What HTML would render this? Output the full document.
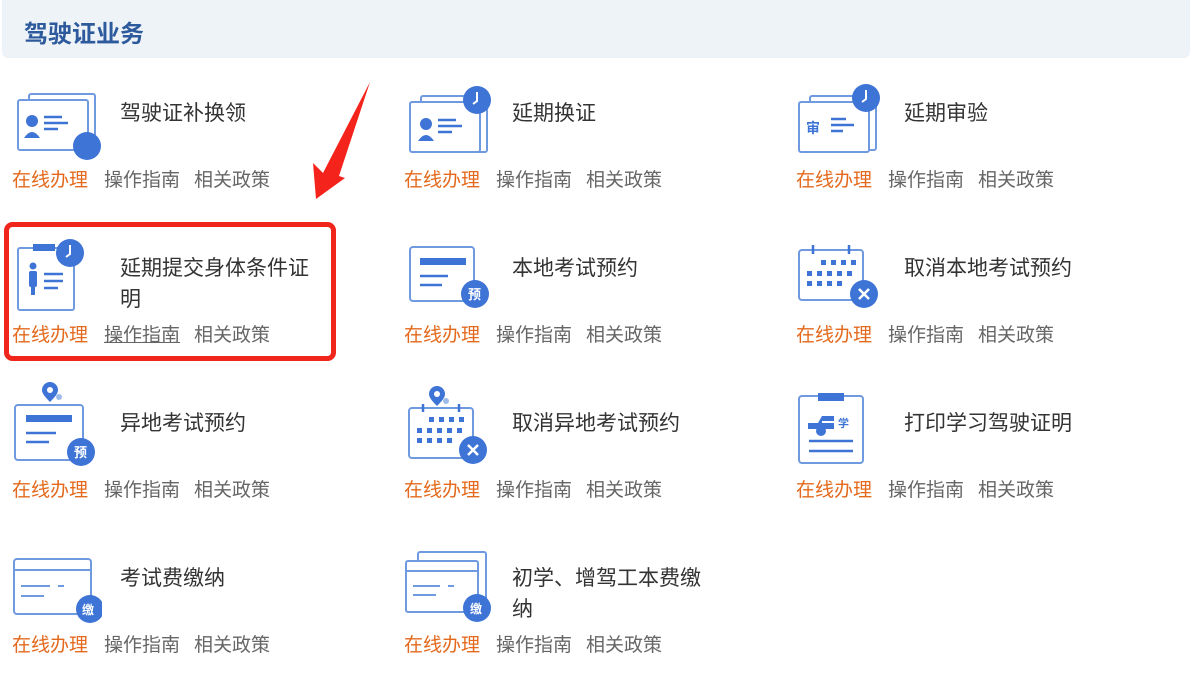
<!DOCTYPE html>
<html><head><meta charset="utf-8"><style>
body{margin:0;width:1200px;height:689px;background:#fff;position:relative;overflow:hidden;font-family:"Liberation Sans","Noto Sans CJK SC",sans-serif}
.hd{position:absolute;left:2px;top:0;width:1188px;height:58px;background:#eef3f8;border-radius:0 0 6px 6px}
.hd span{position:absolute;left:22px;top:14px;font-size:24px;font-weight:bold;color:#2d5a9c}
.it{position:absolute;width:380px;height:150px}
.it svg{position:absolute;left:0;top:0;overflow:visible}
.t{position:absolute;left:108px;top:18px;font-size:21px;line-height:31px;color:#333;width:205px}
.l{position:absolute;top:89px;font-size:19px;line-height:24px;color:#666;white-space:nowrap}
.l1{left:0;color:#e4691c}.l2{left:92px}.l3{left:182px}
.u{text-decoration:underline}
</style></head><body>
<div class="hd"><span>驾驶证业务</span></div>

<svg width="1200" height="689" style="position:absolute;left:0;top:0">
<rect x="6.5" y="224.5" width="327" height="134" rx="6" fill="none" stroke="#f0261d" stroke-width="5"/>
<polygon points="370,82 339,176 345,178 316,199 313,163 323,173" fill="#f4231b"/>
</svg>

<!-- row 1 -->
<div class="it" style="left:12px;top:80px">
<svg width="100" height="90"><g fill="none" stroke="#6f9ae0" stroke-width="2"><rect x="17" y="14" width="66" height="56" rx="2"/><rect x="6" y="20" width="70" height="50" rx="2" fill="#fff"/></g>
<circle cx="20" cy="41" r="6" fill="#3e74d6"/><path d="M12 58 q8-12 16 0z" fill="#3e74d6"/>
<g stroke="#3e74d6" stroke-width="2.5"><line x1="32" y1="37" x2="50" y2="37"/><line x1="32" y1="43" x2="56" y2="43"/><line x1="32" y1="49" x2="46" y2="49"/></g>
<circle cx="75" cy="66" r="14" fill="#3e74d6"/></svg>
<div class="t">驾驶证补换领</div>
<div class="l l1">在线办理</div><div class="l l2">操作指南</div><div class="l l3">相关政策</div></div>

<div class="it" style="left:404px;top:80px">
<svg width="100" height="90"><g fill="none" stroke="#6f9ae0" stroke-width="2"><rect x="17" y="16" width="66" height="56" rx="2"/><rect x="6" y="22" width="70" height="50" rx="2" fill="#fff"/></g>
<circle cx="22" cy="44" r="6" fill="#3e74d6"/><path d="M14 61 q8-12 16 0z" fill="#3e74d6"/>
<g stroke="#3e74d6" stroke-width="2.5"><line x1="34" y1="40" x2="52" y2="40"/><line x1="34" y1="46" x2="58" y2="46"/><line x1="34" y1="52" x2="48" y2="52"/></g>
<circle cx="73" cy="20" r="14" fill="#3e74d6"/><path d="M73 12 v9 l-4 3" stroke="#fff" stroke-width="2" fill="none"/></svg>
<div class="t">延期换证</div>
<div class="l l1">在线办理</div><div class="l l2">操作指南</div><div class="l l3">相关政策</div></div>

<div class="it" style="left:796px;top:80px">
<svg width="100" height="90"><g fill="none" stroke="#6f9ae0" stroke-width="2"><rect x="14" y="16" width="66" height="54" rx="2"/><rect x="3" y="22" width="70" height="50" rx="2" fill="#fff"/></g>
<text x="10" y="53" font-size="14" font-weight="bold" fill="#3e74d6" font-family="Noto Sans CJK SC">审</text>
<g stroke="#3e74d6" stroke-width="2.5"><line x1="35" y1="39" x2="50" y2="39"/><line x1="35" y1="45" x2="58" y2="45"/><line x1="35" y1="51" x2="47" y2="51"/></g>
<circle cx="70" cy="18" r="14" fill="#3e74d6"/><path d="M70 10 v9 l-4 3" stroke="#fff" stroke-width="2" fill="none"/></svg>
<div class="t">延期审验</div>
<div class="l l1">在线办理</div><div class="l l2">操作指南</div><div class="l l3">相关政策</div></div>

<!-- row 2 -->
<div class="it" style="left:12px;top:235px">
<svg width="100" height="90"><rect x="6" y="13" width="56" height="62" rx="2" fill="none" stroke="#6f9ae0" stroke-width="2"/>
<rect x="21" y="9" width="22" height="7" fill="#3e74d6"/>
<circle cx="21" cy="31" r="3.5" fill="#3e74d6"/><rect x="17" y="36" width="8" height="16" rx="2" fill="#3e74d6"/><rect x="19" y="50" width="4" height="10" fill="#3e74d6"/>
<g stroke="#3e74d6" stroke-width="2.5"><line x1="32" y1="39" x2="51" y2="39"/><line x1="32" y1="46" x2="51" y2="46"/><line x1="32" y1="53" x2="46" y2="53"/></g>
<circle cx="58" cy="18" r="14" fill="#3e74d6"/><path d="M58 10 v9 l-4 3" stroke="#fff" stroke-width="2" fill="none"/></svg>
<div class="t">延期提交身体条件证明</div>
<div class="l l1">在线办理</div><div class="l l2 u">操作指南</div><div class="l l3">相关政策</div></div>

<div class="it" style="left:404px;top:235px">
<svg width="100" height="90"><rect x="6" y="12" width="64" height="54" rx="3" fill="none" stroke="#6f9ae0" stroke-width="2"/>
<rect x="16" y="23" width="46" height="7" fill="#3e74d6"/><g stroke="#3e74d6" stroke-width="2.5"><line x1="16" y1="41" x2="44" y2="41"/><line x1="16" y1="50" x2="38" y2="50"/></g>
<circle cx="71" cy="59" r="14" fill="#3e74d6"/><text x="64" y="64" font-size="13" font-weight="bold" fill="#fff" font-family="Noto Sans CJK SC">预</text></svg>
<div class="t">本地考试预约</div>
<div class="l l1">在线办理</div><div class="l l2">操作指南</div><div class="l l3">相关政策</div></div>

<div class="it" style="left:796px;top:235px">
<svg width="100" height="90"><rect x="3" y="15" width="64" height="50" rx="3" fill="none" stroke="#6f9ae0" stroke-width="2"/>
<g stroke="#3e74d6" stroke-width="2.5"><line x1="17" y1="10" x2="17" y2="19"/><line x1="53" y1="10" x2="53" y2="19"/></g>
<g fill="#3e74d6"><rect x="25" y="25" width="5" height="5"/><rect x="35" y="25" width="5" height="5"/><rect x="45" y="25" width="5" height="5"/><rect x="55" y="25" width="5" height="5"/>
<rect x="11" y="36" width="5" height="5"/><rect x="21" y="36" width="5" height="5"/><rect x="31" y="36" width="5" height="5"/><rect x="41" y="36" width="5" height="5"/><rect x="51" y="36" width="5" height="5"/>
<rect x="11" y="46" width="5" height="5"/><rect x="21" y="46" width="5" height="5"/><rect x="31" y="46" width="5" height="5"/><rect x="41" y="46" width="5" height="5"/></g>
<circle cx="68" cy="59" r="14" fill="#3e74d6"/><path d="M63 54 l10 10 M73 54 l-10 10" stroke="#fff" stroke-width="2.5"/></svg>
<div class="t">取消本地考试预约</div>
<div class="l l1">在线办理</div><div class="l l2">操作指南</div><div class="l l3">相关政策</div></div>

<!-- row 3 -->
<div class="it" style="left:12px;top:390px">
<svg width="100" height="90"><rect x="3" y="15" width="68" height="55" rx="3" fill="none" stroke="#6f9ae0" stroke-width="2"/>
<path d="M38 12 c-6-6-8-9-8-12 a8 8 0 0 1 16 0 c0 3-2 6-8 12z" fill="#3e74d6"/><circle cx="38" cy="0" r="3" fill="#fff"/><circle cx="47" cy="7" r="3" fill="#9fbbe9"/>
<rect x="14" y="25" width="46" height="7" fill="#3e74d6"/><g stroke="#3e74d6" stroke-width="2.5"><line x1="14" y1="43" x2="44" y2="43"/><line x1="14" y1="52" x2="37" y2="52"/></g>
<circle cx="69" cy="62" r="14" fill="#3e74d6"/><text x="62" y="67" font-size="13" font-weight="bold" fill="#fff" font-family="Noto Sans CJK SC">预</text></svg>
<div class="t">异地考试预约</div>
<div class="l l1">在线办理</div><div class="l l2">操作指南</div><div class="l l3">相关政策</div></div>

<div class="it" style="left:404px;top:390px">
<svg width="100" height="90"><rect x="5" y="18" width="64" height="50" rx="3" fill="none" stroke="#6f9ae0" stroke-width="2"/>
<g stroke="#3e74d6" stroke-width="2.5"><line x1="19" y1="14" x2="19" y2="22"/><line x1="55" y1="14" x2="55" y2="22"/></g>
<path d="M33 16 c-6-6-8-9-8-12 a8 8 0 0 1 16 0 c0 3-2 6-8 12z" fill="#3e74d6"/><circle cx="33" cy="4" r="3" fill="#fff"/><circle cx="42" cy="11" r="3" fill="#9fbbe9"/>
<g fill="#3e74d6"><rect x="25" y="27" width="5" height="5"/><rect x="35" y="27" width="5" height="5"/><rect x="45" y="27" width="5" height="5"/><rect x="55" y="27" width="5" height="5"/>
<rect x="13" y="38" width="5" height="5"/><rect x="23" y="38" width="5" height="5"/><rect x="33" y="38" width="5" height="5"/><rect x="43" y="38" width="5" height="5"/><rect x="53" y="38" width="5" height="5"/>
<rect x="13" y="48" width="5" height="5"/><rect x="23" y="48" width="5" height="5"/><rect x="33" y="48" width="5" height="5"/><rect x="43" y="48" width="5" height="5"/></g>
<circle cx="69" cy="60" r="14" fill="#3e74d6"/><path d="M64 55 l10 10 M74 55 l-10 10" stroke="#fff" stroke-width="2.5"/></svg>
<div class="t">取消异地考试预约</div>
<div class="l l1">在线办理</div><div class="l l2">操作指南</div><div class="l l3">相关政策</div></div>

<div class="it" style="left:796px;top:390px">
<svg width="100" height="90"><rect x="3" y="6" width="64" height="67" rx="3" fill="none" stroke="#6f9ae0" stroke-width="2"/>
<rect x="22" y="3" width="26" height="8" fill="#3e74d6"/>
<path d="M12 33 h10 l4-7 h12 v5 h-12 v2 h12 v6 h-26z" fill="#3e74d6"/><circle cx="25" cy="41" r="5" fill="#3e74d6"/>
<text x="42" y="37" font-size="11" font-weight="bold" fill="#3e74d6" font-family="Noto Sans CJK SC">学</text>
<g stroke="#3e74d6" stroke-width="2.5"><line x1="13" y1="51" x2="57" y2="51"/><line x1="13" y1="61" x2="57" y2="61"/></g></svg>
<div class="t">打印学习驾驶证明</div>
<div class="l l1">在线办理</div><div class="l l2">操作指南</div><div class="l l3">相关政策</div></div>

<!-- row 4 -->
<div class="it" style="left:12px;top:545px">
<svg width="100" height="90">
<rect x="2" y="14" width="77" height="55" rx="3" fill="none" stroke="#6f9ae0" stroke-width="2"/><line x1="2" y1="25" x2="79" y2="25" stroke="#6f9ae0" stroke-width="2"/>
<g stroke="#6f9ae0" stroke-width="2"><line x1="9" y1="41" x2="38" y2="41"/><line x1="46" y1="41" x2="52" y2="41"/><line x1="9" y1="51" x2="32" y2="51"/></g>
<circle cx="78" cy="64" r="14" fill="#3e74d6"/><rect x="90" y="45" width="10" height="35" fill="#fff"/><text x="70" y="69" font-size="12" font-weight="bold" fill="#fff" font-family="Noto Sans CJK SC">缴</text></svg>
<div class="t">考试费缴纳</div>
<div class="l l1">在线办理</div><div class="l l2">操作指南</div><div class="l l3">相关政策</div></div>

<div class="it" style="left:404px;top:545px">
<svg width="100" height="90"><g fill="none" stroke="#6f9ae0" stroke-width="2"><rect x="14" y="7" width="68" height="53" rx="2"/><rect x="2" y="16" width="72" height="51" rx="2" fill="#fff"/></g>
<line x1="2" y1="26" x2="74" y2="26" stroke="#6f9ae0" stroke-width="2"/>
<g stroke="#6f9ae0" stroke-width="2"><line x1="9" y1="41" x2="36" y2="41"/><line x1="44" y1="41" x2="50" y2="41"/><line x1="9" y1="50" x2="32" y2="50"/></g>
<circle cx="73" cy="63" r="14" fill="#3e74d6"/><text x="66" y="68" font-size="12" font-weight="bold" fill="#fff" font-family="Noto Sans CJK SC">缴</text></svg>
<div class="t">初学、增驾工本费缴纳</div>
<div class="l l1">在线办理</div><div class="l l2">操作指南</div><div class="l l3">相关政策</div></div>
</body></html>
